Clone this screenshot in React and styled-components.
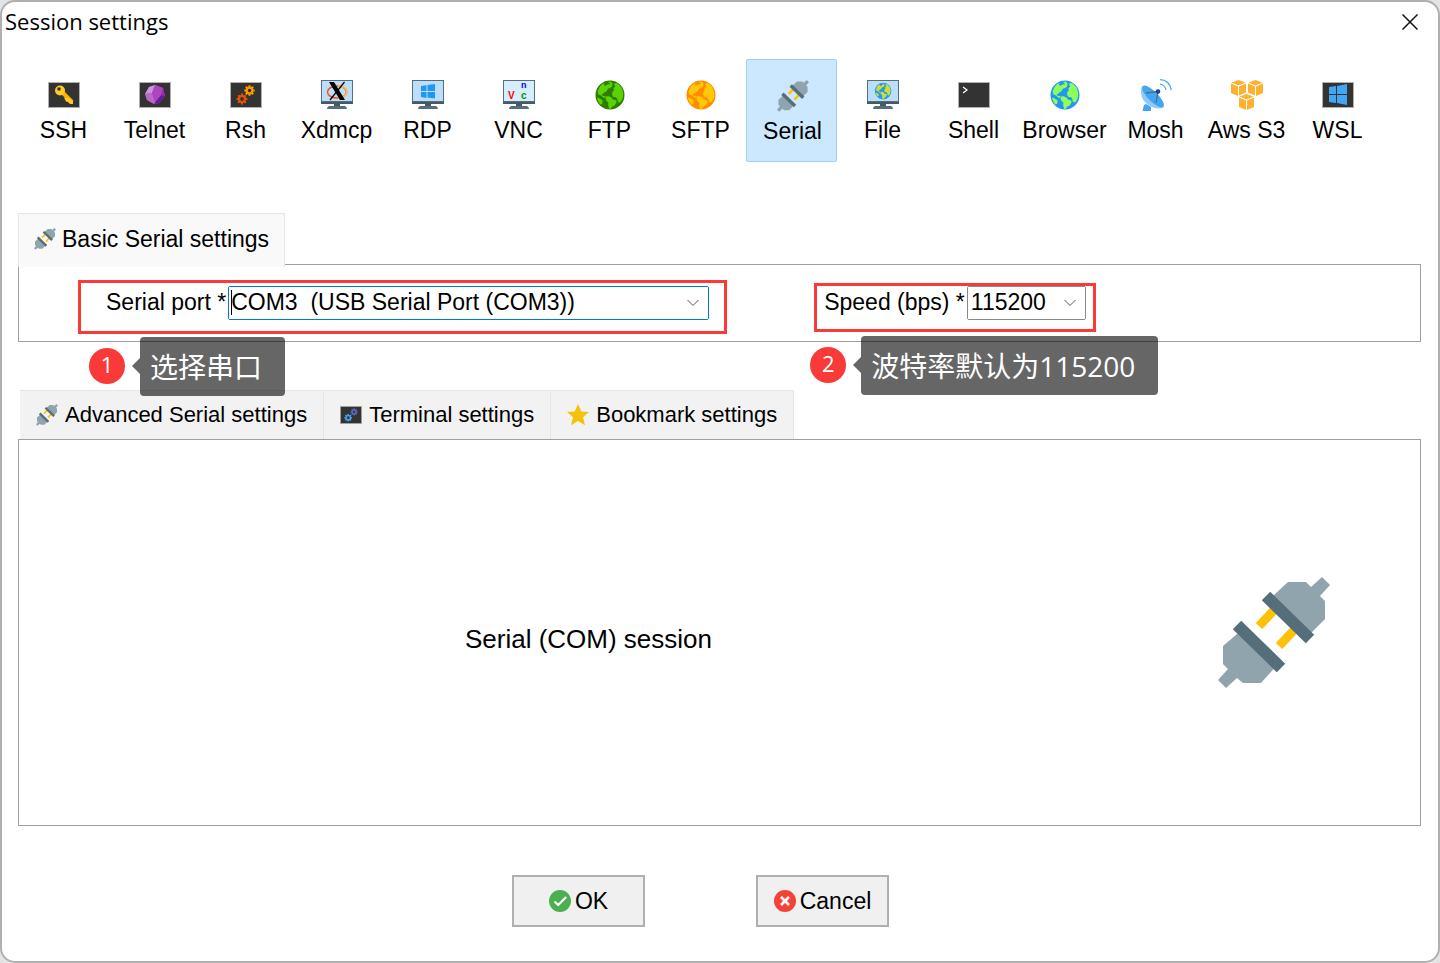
import { useState } from "react";
import styled, { createGlobalStyle, css } from "styled-components";

const PlugIcon = ({ size = 32 }) => (
  <svg width={size} height={size} viewBox="0 0 112 112" aria-hidden="true">
    <path
      fill="#90a4ae"
      d="M51 23 57 17 70 5h18l5 5 11-10 8 8-10 11 5 5v18L93 56 87 62z"
    />
    <path
      fill="#90a4ae"
      d="M26 51 5 69v18l5 5-10 11 8 8 11-10 6 5h18L61 86z"
    />
    <path stroke="#ffc107" strokeWidth="9" d="M58 31 41 49M78 51 61 69" />
    <path
      stroke="#546e7a"
      strokeWidth="12"
      d="M48 19 92 62M19 48 63 91"
    />
  </svg>
);

const Screen = ({ children, size = 32 }) => (
  <svg width={size} height={size} viewBox="0 0 32 32" aria-hidden="true">
    <rect x="0.5" y="3.5" width="31" height="25" fill="#333" stroke="#b0b0b0" />
    {children}
  </svg>
);

const Monitor = ({ children, fill = "#bbdefb" }) => (
  <svg width="32" height="32" viewBox="0 0 32 32" aria-hidden="true">
    <path fill="#546e7a" d="M0 1h32v24H19v2h5q2 1 2 3H6q0-2 2-3h5v-2H0z" />
    <path fill="#455a64" d="M0 23h32v2H0zM13 25h6v2h-6z" />
    <path fill={fill} d="M1 2h30v20H1z" />
    {children}
  </svg>
);

const Gear = ({ x, y, r, color }) => (
  <g transform={`translate(${x} ${y})`} fill="none" stroke={color}>
    <circle r={r} strokeWidth="2.2" />
    {[0, 45, 90, 135].map((a) => (
      <path
        key={a}
        transform={`rotate(${a})`}
        strokeWidth="2"
        d={`M0 ${-r - 2.4}V${-r}M0 ${r}V${r + 2.4}`}
      />
    ))}
  </g>
);

const Globe = ({ sea, land }) => (
  <g>
    <circle cx="16" cy="16" r="14.5" fill={sea} />
    <g fill={land}>
      <path d="M3.600 12.500 5.500 8 8.500 4.800 10.500 4l-.7 2.200 2.200.6 1.800-1.600 2 .2-.4-1.600L13.500 3l3-.4 2 1.700-.5 3.200-2 1.500-2 .8-1.700 2.700-1.800.7-1.300 1.500-1.700.7 1 1.300 2.500.3.6 1.600-2.100.2L7 16.500l-2.600-1z" />
      <path d="m11.500 17.400 3.300-.2 3 1.600 1 1.700 3.200.7.6 2-2 3.200-2.200 1.200-2 2.500-1.300-.3-.9-3.500.2-2.600-2.600-2.600z" />
      <path d="m18.300 13 1.600-1.800-.5-2 2-1.800-1.400-1.600L21 4l2.800.6 3.700 4 1.700 5-.2 4.600-2 4.400-1.400 1-1.800-.8-.6-3.200-1.200-1.400-2.600-.3-1.300-2.200z" />
      <path d="m2.800 18.500 2.500.7 3.400 2.300-.5 2.800-1.700 1.400-2.100-2.900z" />
    </g>
  </g>
);

const GlobeIcon = (props) => (
  <svg width="32" height="32" viewBox="0 0 32 32" aria-hidden="true">
    <Globe {...props} />
  </svg>
);

const KeyIcon = () => (
  <Screen>
    <path stroke="#ffb300" strokeWidth="4" d="m14 13 10 10" />
    <path fill="#ffca28" d="m22 20 3 2v3h-3l-2-2-2-.5-2-4z" />
    <circle cx="12" cy="11.5" r="5" fill="#ffca28" />
    <circle cx="11" cy="10" r="1.8" fill="#333" />
  </Screen>
);

const TelnetIcon = () => (
  <Screen>
    <path fill="#ab47bc" d="m16 6 8 3 2 8-6 7-5 1-7-4-2-6 4-7z" />
    <path fill="#ce93d8" d="M16 6 10 8l-4 7 7-1z" />
    <path fill="#ba68c8" d="m6 15 7-1 4 10-2 1-7-4z" />
    <path fill="#ab47bc" d="m16 6-3 8 9 2 2-7z" />
    <path fill="#9c27b0" d="m24 9-2 7 4 1z" />
    <path fill="#6a1b9a" d="m22 16 4 1-6 7-5 1 2-3z" />
    <path fill="#ab47bc" d="m13 14 9 2-6 7z" />
  </Screen>
);

const RshIcon = () => (
  <Screen>
    <Gear x={19.5} y={11.5} r={2.8} color="#ff9800" />
    <Gear x={12} y={20} r={3} color="#e65100" />
  </Screen>
);

const XdmcpIcon = () => (
  <Monitor>
    <ellipse cx="16" cy="13" rx="9.5" ry="6" fill="none" stroke="#f4511e" strokeWidth="1.5" />
    <path d="M17 7a9 6 0 0 1 0 12" fill="none" stroke="#ffb74d" strokeWidth="1.8" />
    <path d="M8 3h5l11 18h-5z" />
    <path d="m23.500 3-14.500 18" stroke="#000" strokeWidth="1.2" />
  </Monitor>
);

const RdpIcon = () => (
  <Monitor>
    <path
      fill="#2196f3"
      d="m9 7 5.500-.8V12H9zM15.500 6 23 5v7h-7.500zM9 13h5.500v6L9 18zM15.500 13H23v6.500l-7.500-1z"
    />
  </Monitor>
);

const VncIcon = () => (
  <Monitor fill="#d6ecff">
    <g fontFamily="Liberation Sans" fontWeight="bold">
      <text x="5" y="20" fontSize="10" fill="#f00">V</text>
      <text x="18" y="20" fontSize="10" fill="#090">c</text>
      <text x="18" y="9" fontSize="9" fill="#00f">n</text>
    </g>
  </Monitor>
);

const FileIcon = () => (
  <Monitor>
    <g transform="translate(7 3) scale(0.57)">
      <Globe sea="#2196f3" land="#cddc39" />
    </g>
  </Monitor>
);

const ShellIcon = () => (
  <Screen>
    <path d="m5 8 4 3-4 3" fill="none" stroke="#fff" strokeWidth="1.3" />
  </Screen>
);

const MoshIcon = () => (
  <svg width="32" height="32" viewBox="0 0 32 32" fill="none" aria-hidden="true">
    <path fill="#42a5f5" d="m4 26-1.500 6H11v-4l-5-3z" />
    <path
      fill="#90caf9"
      d="M2 7C-1 16 3 23 10 27c5 3 11 3 14 1z"
    />
    <ellipse
      cx="13"
      cy="17.500"
      rx="5"
      ry="14.500"
      fill="#42a5f5"
      transform="rotate(-45 13 17.500)"
    />
    <path stroke="#546e7a" strokeWidth="1.3" d="m6 14 12-1.500L16 24" />
    <circle cx="18" cy="12.500" r="2.300" fill="#0d47a1" />
    <path
      stroke="#42a5f5"
      strokeWidth="1.2"
      d="M20 5q5 1 6 6M20 .7q9 0 11.400 10.300"
    />
  </svg>
);

const Cube = ({ x, y }) => (
  <g transform={`translate(${x} ${y})`} fill="#ffb02e">
    <path d="m7.500 0 7 2.500-7 3-7-3zM0 3.500l7 3V16l-7-3zM15 3.500l-7 3V16l7-3z" />
  </g>
);

const AwsIcon = () => (
  <svg width="32" height="32" viewBox="0 0 32 32" aria-hidden="true">
    <Cube x={0} y={1} />
    <Cube x={17} y={1} />
    <path fill="#fff" d="m7 17 9-4 9 4v15H7z" />
    <Cube x={8} y={15} />
  </svg>
);

const WslIcon = () => (
  <Screen>
    <path
      fill="#42a5f5"
      d="m7 8 7-1v8H7zM15 7l10-2v10H15zM7 16h7v8l-7-1zM15 16h10v10l-10-2z"
    />
  </Screen>
);

const TerminalIcon = () => (
  <Screen size={22}>
    <Gear x={20.5} y={11.5} r={2.8} color="#5c6bc0" />
    <Gear x={12} y={20} r={3.2} color="#42a5f5" />
  </Screen>
);

const StarIcon = () => (
  <svg width="22" height="22" viewBox="0 0 22 22" aria-hidden="true">
    <path
      fill="#f4c20d"
      d="m11 0 3.300 7.500 7.700.6-6 5.200 2 8L11 17l-7 4.300 2-8-6-5.200 7.700-.6z"
    />
  </svg>
);

const OkIcon = () => (
  <svg width="22" height="22" viewBox="0 0 22 22" fill="none" aria-hidden="true">
    <circle cx="11" cy="11" r="11" fill="#4caf50" />
    <path d="m5.500 11.500 3.700 3.500 8-8" stroke="#fff" strokeWidth="2.200" />
  </svg>
);

const CancelIcon = () => (
  <svg width="22" height="22" viewBox="0 0 22 22" aria-hidden="true">
    <circle cx="11" cy="11" r="11" fill="#f44336" />
    <path d="m7 7 8 8M15 7l-8 8" stroke="#fff" strokeWidth="2.600" />
  </svg>
);

const CloseIcon = () => (
  <svg width="16" height="16" viewBox="0 0 16 16" aria-hidden="true">
    <path d="m.5.5 15 15M15.500.5l-15 15" stroke="#111" strokeWidth="1.500" />
  </svg>
);

const sessions = [
  { name: "SSH", icon: <KeyIcon /> },
  { name: "Telnet", icon: <TelnetIcon /> },
  { name: "Rsh", icon: <RshIcon /> },
  { name: "Xdmcp", icon: <XdmcpIcon /> },
  { name: "RDP", icon: <RdpIcon /> },
  { name: "VNC", icon: <VncIcon /> },
  { name: "FTP", icon: <GlobeIcon sea="#2e7d00" land="#5bd300" /> },
  { name: "SFTP", icon: <GlobeIcon sea="#ff8c00" land="#ffca00" /> },
  { name: "Serial", icon: <PlugIcon /> },
  { name: "File", icon: <FileIcon /> },
  { name: "Shell", icon: <ShellIcon /> },
  { name: "Browser", icon: <GlobeIcon sea="#2196f3" land="#8cff5a" /> },
  { name: "Mosh", icon: <MoshIcon /> },
  { name: "Aws S3", icon: <AwsIcon /> },
  { name: "WSL", icon: <WslIcon /> },
];

const Combo = ({ id, active, options }) => (
  <ComboBox $active={active}>
    <select id={id}>
      {options.map((o) => (
        <option key={o}>{o}</option>
      ))}
    </select>
    <svg width="12" height="8" viewBox="0 0 12 8" fill="none" aria-hidden="true">
      <path d="m.5 1 5.500 5.500L11.500 1" stroke="#555" />
    </svg>
  </ComboBox>
);

const Callout = ({ number, text, left, top }) => (
  <CalloutBox $left={left} $top={top}>
    <Badge>{number}</Badge>
    <Bubble>{text}</Bubble>
  </CalloutBox>
);

const App = () => {
  const [session, setSession] = useState("Serial");

  return (
    <>
      <GlobalStyle />
      <Dialog>
        <TitleBar>
          <h1>Session settings</h1>
          <button type="button" aria-label="Close">
            <CloseIcon />
          </button>
        </TitleBar>
        <Toolbar>
          {sessions.map(({ name, icon }) => (
            <SessionButton
              key={name}
              type="button"
              $selected={name === session}
              onClick={() => setSession(name)}
            >
              {icon}
              <span>{name}</span>
            </SessionButton>
          ))}
        </Toolbar>
        <Content>
          <Tabs>
            <Tab type="button" $current>
              <PlugIcon size={22} />
              Basic Serial settings
            </Tab>
          </Tabs>
          <BasicPanel>
            <FieldGroup $wide>
              <label htmlFor="port">Serial port *</label>
              <Combo
                id="port"
                active
                options={["COM3\u00a0 (USB Serial Port (COM3))"]}
              />
              <Callout number="1" text="选择串口" left={8} top={54} />
            </FieldGroup>
            <FieldGroup>
              <label htmlFor="speed">Speed (bps) *</label>
              <Combo id="speed" options={["115200", "57600", "9600"]} />
              <Callout
                number="2"
                text="波特率默认为115200"
                left={-7}
                top={50}
              />
            </FieldGroup>
          </BasicPanel>
          <Tabs $lower>
            <Tab type="button">
              <PlugIcon size={22} />
              Advanced Serial settings
            </Tab>
            <Tab type="button">
              <TerminalIcon />
              Terminal settings
            </Tab>
            <Tab type="button">
              <StarIcon />
              Bookmark settings
            </Tab>
          </Tabs>
          <SessionPanel>
            <p>Serial (COM) session</p>
            <PlugIcon size={112} />
          </SessionPanel>
        </Content>
        <Footer>
          <ActionButton type="button">
            <OkIcon />
            OK
          </ActionButton>
          <ActionButton type="button">
            <CancelIcon />
            Cancel
          </ActionButton>
        </Footer>
      </Dialog>
    </>
  );
};
export default App;

const GlobalStyle = createGlobalStyle`
  * {
    box-sizing: border-box;
    margin: 0;
  }
  body {
    background: #e4e4e4;
    color: #000;
    font: 23px/28px "Liberation Sans", Arial, sans-serif;
  }
  button, select {
    font: inherit;
    color: inherit;
  }
  svg {
    flex: none;
  }
`;

const Dialog = styled.main`
  min-height: 100vh;
  display: flex;
  flex-direction: column;
  background: #fff;
  border: 2px solid #b0b0b0;
  border-radius: 15px;
`;

const TitleBar = styled.header`
  height: 40px;
  display: flex;
  align-items: center;
  justify-content: space-between;
  padding: 0 20px 0 3px;
  h1 {
    padding-bottom: 3px;
    font: 22px/30px "Open Sans", "Noto Sans", sans-serif;
  }
  button {
    display: flex;
    padding: 0;
    border: 0;
    background: none;
  }
`;

const Toolbar = styled.nav`
  display: flex;
  margin-top: 17px;
  padding: 0 16px;
`;

const SessionButton = styled.button`
  width: 91px;
  height: 103px;
  display: flex;
  flex-direction: column;
  align-items: center;
  gap: 5px;
  padding: 19px 0 0;
  border: 1px solid transparent;
  border-radius: 2px;
  background: none;
  white-space: nowrap;
  ${({ $selected }) =>
    $selected &&
    css`
      padding: 20px 0 0 2px;
      border-color: #99d1ff;
      background: #cce8ff;
    `}
`;

const Content = styled.section`
  flex: 1;
  display: flex;
  flex-direction: column;
  margin: 51px 17px 0 16px;
`;

const Tabs = styled.div`
  display: flex;
  ${({ $lower }) =>
    $lower
      ? css`
          margin-top: 48px;
          padding-left: 2px;
        `
      : css`
          z-index: 1;
          margin-bottom: -3px;
        `}
`;

const Tab = styled.button`
  height: 49px;
  display: flex;
  align-items: center;
  gap: 7px;
  padding: 0 16px;
  border: 1px solid #e5e5e5;
  border-width: 1px 1px 0 0;
  background: #f2f2f2;
  font-size: 22px;
  ${({ $current }) =>
    $current &&
    css`
      height: 54px;
      gap: 6px;
      padding: 0 15px 4px;
      border-left-width: 1px;
      background: #f9f9f9;
      font-size: 23px;
    `}
`;

const BasicPanel = styled.div`
  display: flex;
  align-items: baseline;
  gap: 87px;
  height: 78px;
  padding: 15px 0 0 59px;
  border: 1px solid #a0a0a0;
`;

const FieldGroup = styled.div`
  position: relative;
  display: flex;
  align-items: center;
  gap: 2px;
  padding: ${({ $wide }) => ($wide ? "3px 15px 11px 25px" : "0 7px 9px")};
  border: 3px solid #fa3939;
  white-space: nowrap;
  label {
    padding-bottom: 2px;
  }
`;

const ComboBox = styled.div`
  position: relative;
  width: ${({ $active }) => ($active ? "481px" : "119px")};
  border: 1px solid ${({ $active }) => ($active ? "#0078d7" : "#8a8a8a")};
  border-radius: 2px;
  select {
    width: 100%;
    height: 32px;
    display: block;
    padding: 0 28px 2px ${({ $active }) => ($active ? "2px" : "3px")};
    border: 0;
    outline: 0;
    appearance: none;
    background: #fff;
  }
  svg {
    position: absolute;
    top: 12px;
    right: 9px;
    pointer-events: none;
  }
  ${({ $active }) =>
    $active &&
    css`
      &::before {
        content: "";
        position: absolute;
        top: 3px;
        left: 2px;
        width: 1px;
        height: 25px;
        background: #000;
      }
    `}
`;

const CalloutBox = styled.div`
  position: absolute;
  z-index: 2;
  left: ${({ $left }) => $left}px;
  top: ${({ $top }) => $top}px;
  display: flex;
  align-items: center;
  gap: 15px;
  color: #fff;
  font-family: "Open Sans", "Noto Sans CJK SC", sans-serif;
`;

const Badge = styled.span`
  width: 36px;
  height: 36px;
  margin-bottom: 1px;
  border-radius: 50%;
  background: #fa3939;
  font-size: 22px;
  line-height: 32px;
  text-align: center;
`;

const Bubble = styled.span`
  position: relative;
  height: 59px;
  padding: 0 23px 0 10px;
  border-radius: 4px;
  background: rgba(0, 0, 0, 0.6);
  font-size: 28px;
  line-height: 61px;
  &::before {
    content: "";
    position: absolute;
    top: 21px;
    right: 100%;
    border: 8px solid transparent;
    border-left: 0;
    border-right-color: rgba(0, 0, 0, 0.6);
  }
`;

const SessionPanel = styled.div`
  flex: 1;
  display: flex;
  align-items: center;
  padding-right: 90px;
  border: 1px solid #a0a0a0;
  p {
    flex: 1;
    padding: 12px 60px 0 0;
    font-size: 26px;
    text-align: center;
  }
`;

const Footer = styled.footer`
  display: flex;
  justify-content: center;
  gap: 111px;
  padding: 49px 39px 34px 0;
`;

const ActionButton = styled.button`
  width: 133px;
  height: 52px;
  display: flex;
  align-items: center;
  justify-content: center;
  gap: 4px;
  padding: 0;
  border: 2px solid #b0b0b0;
  background: #f0f0f0;
`;
